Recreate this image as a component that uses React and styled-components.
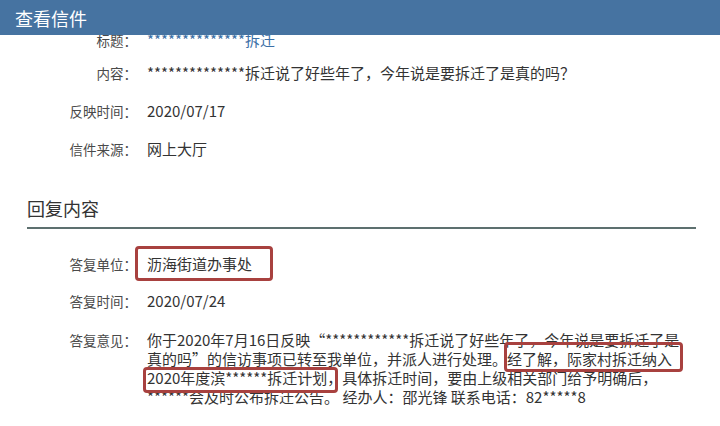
import React from "react";
import styled, {createGlobalStyle} from "styled-components";

const GlobalStyle = createGlobalStyle`
  body {
    margin: 0;
    background: #ffffff;
    font-family: "Noto Sans CJK SC", "Noto Sans", sans-serif;
  }
`

const Page = styled.div`
  position: relative;
  width: 720px;
  height: 426px;
  overflow: hidden;
  background: #ffffff;
`

const TopBar = styled.div`
  position: absolute;
  top: 0;
  left: 0;
  right: 0;
  height: 35px;
  background: #4673a1;
  display: flex;
  align-items: center;
  padding-left: 15px;
  color: #ffffff;
  font-size: 18px;
  z-index: 2;
`

const Content = styled.div`
  display: flex;
  flex-direction: column;
  padding-top: 30px;
`

const Field = styled.div`
  display: flex;
  align-items: baseline;
  margin-top: ${p => p.$mt || 0}px;
`

const Label = styled.div`
  width: 137px;
  flex-shrink: 0;
  text-align: right;
  font-size: 13.5px;
  line-height: 20px;
  color: #4a4a4a;
`

const Value = styled.div`
  margin-left: 10px;
  font-size: 15px;
  line-height: ${p => p.$lh || 20}px;
  color: ${p => p.$blue ? "#3b6fa6" : "#333333"};
  white-space: nowrap;
`

const Line = styled.span`
  display: block;
`

const SectionTitle = styled.div`
  margin: 37px 24px 0 27px;
  padding-bottom: 7px;
  border-bottom: 2px solid #5d706f;
  font-size: 18px;
  line-height: 24px;
  color: #333333;
`

const Mark = styled.span`
  position: relative;

  &::after {
    content: "";
    position: absolute;
    top: ${p => p.$t}px;
    bottom: ${p => p.$b}px;
    left: ${p => p.$l}px;
    right: ${p => p.$r}px;
    border: 3px solid #a8413f;
    border-radius: 4px;
  }
`

const App = () => {
    return (
        <Page>
            <GlobalStyle/>
            <TopBar>查看信件</TopBar>
            <Content>
                <Field>
                    <Label>标题：</Label>
                    <Value $blue>**************拆迁</Value>
                </Field>
                <Field $mt={13}>
                    <Label>内容：</Label>
                    <Value>**************拆迁说了好些年了，今年说是要拆迁了是真的吗？</Value>
                </Field>
                <Field $mt={18}>
                    <Label>反映时间：</Label>
                    <Value>2020/07/17</Value>
                </Field>
                <Field $mt={18}>
                    <Label>信件来源：</Label>
                    <Value>网上大厅</Value>
                </Field>

                <SectionTitle>回复内容</SectionTitle>

                <Field $mt={25}>
                    <Label>答复单位：</Label>
                    <Value><Mark $t={-7} $b={-7} $l={-12} $r={-21}>沥海街道办事处</Mark></Value>
                </Field>
                <Field $mt={17}>
                    <Label>答复时间：</Label>
                    <Value>2020/07/24</Value>
                </Field>
                <Field $mt={19}>
                    <Label>答复意见：</Label>
                    <Value $lh={19}>
                        <Line>你于2020年7月16日反映“************拆迁说了好些年了，今年说是要拆迁了是</Line>
                        <Line>真的吗”的信访事项已转至我单位，并派人进行处理。<Mark $t={-6} $b={-3} $l={-3} $r={-11}>经了解，际家村拆迁纳入</Mark></Line>
                        <Line><Mark $t={0} $b={-5} $l={-4} $r={-11}>2020年度滨******拆迁计划</Mark>，具体拆迁时间，要由上级相关部门给予明确后，</Line>
                        <Line>******会及时公布拆迁公告。 经办人：邵光锋 联系电话：82*****8</Line>
                    </Value>
                </Field>
            </Content>
        </Page>
    )
}

export default App;
